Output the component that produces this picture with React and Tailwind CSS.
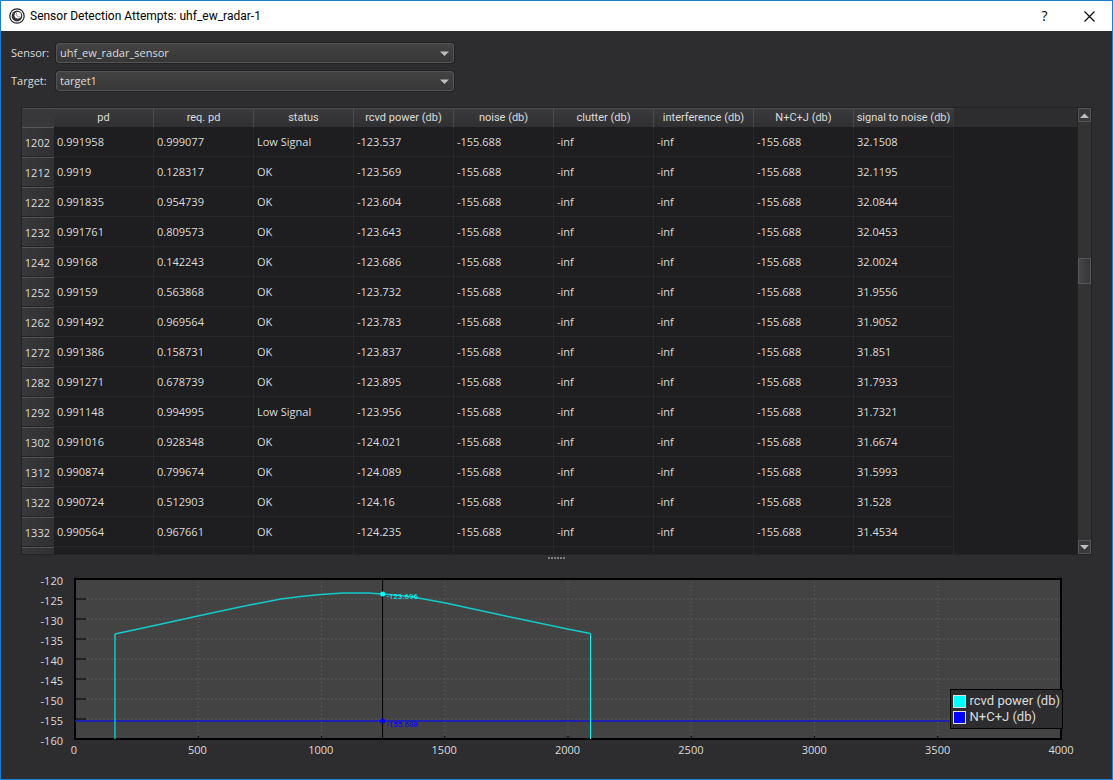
const COLUMNS = [
  "pd", "req. pd", "status", "rcvd power (db)", "noise (db)",
  "clutter (db)", "interference (db)", "N+C+J (db)", "signal to noise (db)",
];

const ROWS = [
  ["1202", "0.991958", "0.999077", "Low Signal", "-123.537", "32.1508"],
  ["1212", "0.9919", "0.128317", "OK", "-123.569", "32.1195"],
  ["1222", "0.991835", "0.954739", "OK", "-123.604", "32.0844"],
  ["1232", "0.991761", "0.809573", "OK", "-123.643", "32.0453"],
  ["1242", "0.99168", "0.142243", "OK", "-123.686", "32.0024"],
  ["1252", "0.99159", "0.563868", "OK", "-123.732", "31.9556"],
  ["1262", "0.991492", "0.969564", "OK", "-123.783", "31.9052"],
  ["1272", "0.991386", "0.158731", "OK", "-123.837", "31.851"],
  ["1282", "0.991271", "0.678739", "OK", "-123.895", "31.7933"],
  ["1292", "0.991148", "0.994995", "Low Signal", "-123.956", "31.7321"],
  ["1302", "0.991016", "0.928348", "OK", "-124.021", "31.6674"],
  ["1312", "0.990874", "0.799674", "OK", "-124.089", "31.5993"],
  ["1322", "0.990724", "0.512903", "OK", "-124.16", "31.528"],
  ["1332", "0.990564", "0.967661", "OK", "-124.235", "31.4534"],
  ["", "", "", "", "", ""],
];

function cellsOf([, pd, req, status, power, snr]) {
  const filled = pd !== "";
  const noise = filled ? "-155.688" : "";
  const inf = filled ? "-inf" : "";
  return [pd, req, status, power, noise, inf, inf, noise, snr];
}

const Y_TICKS = [-120, -125, -130, -135, -140, -145, -150, -155, -160];
const X_TICKS = [0, 500, 1000, 1500, 2000, 2500, 3000, 3500, 4000];

function TitleBar() {
  return (
    <header className="flex h-[30px] shrink-0 items-center bg-white pl-2 text-black">
      <svg className="size-4" viewBox="0 0 16 16" aria-hidden="true">
        <circle cx="8" cy="8" r="7.2" fill="#fff" stroke="#222" strokeWidth="1.2" />
        <circle cx="8" cy="8" r="5.4" fill="#333" />
        <circle cx="8.8" cy="7.2" r="3.3" fill="#fff" />
        <path d="M7.6 4.9A2.9 2.9 0 0 0 11.2 8.8" fill="none" stroke="#888" strokeWidth="0.9" />
      </svg>
      <h1 className="ml-[5px] font-['Roboto',sans-serif] text-xs">Sensor Detection Attempts: uhf_ew_radar-1</h1>
      <div className="ml-auto flex h-full">
        <button type="button" aria-label="Help" className="w-[45px] text-sm">?</button>
        <button type="button" aria-label="Close" className="flex w-[45px] items-center justify-center">
          <svg className="size-[11px]" viewBox="0 0 11 11" aria-hidden="true">
            <path d="M0.5 0.5L10.5 10.5M10.5 0.5L0.5 10.5" stroke="#000" strokeWidth="1.1" />
          </svg>
        </button>
      </div>
    </header>
  );
}

function Field({ id, label, value }) {
  return (
    <div className="flex items-center">
      <label htmlFor={id} className="w-[45px]">{label}</label>
      <div className="relative flex w-full max-w-[398px] items-center">
        <select
          id={id}
          className="h-5 w-full appearance-none rounded-[3px] border border-[#555557] bg-linear-to-b from-[#434344] to-[#373738] pr-6 pl-[3px] leading-4 shadow-[0_0_0_1px_#222223]"
        >
          <option>{value}</option>
        </select>
        <svg className="pointer-events-none absolute right-[5px] h-[5px] w-[9px]" viewBox="0 0 9 5" aria-hidden="true">
          <path d="M0 0.5H9L4.5 5Z" fill="#bebebe" />
        </svg>
      </div>
    </div>
  );
}

function ScrollButton({ label, path }) {
  return (
    <button
      type="button"
      aria-label={label}
      className="flex h-[14px] shrink-0 items-center justify-center border border-[#555557] bg-[#39393a]"
    >
      <svg className="h-[5px] w-[9px]" viewBox="0 0 9 5" aria-hidden="true">
        <path d={path} fill="#bebebe" />
      </svg>
    </button>
  );
}

function AttemptsTable() {
  return (
    <section className="mx-5 flex min-h-0 flex-1 border border-[#222223] bg-[#1e1e20]">
      <div className="min-w-0 flex-1 overflow-hidden bg-linear-to-b from-[#2d2d2f] from-[19px] to-[#1e1e20] to-[19px]">
        <table className="w-[932px] table-fixed border-separate border-spacing-0">
          <colgroup>
            <col className="w-8" />
            {COLUMNS.map((name) => <col key={name} className="w-[100px]" />)}
          </colgroup>
          <thead>
            <tr className="h-[19px]">
              <td className="border-t border-[#4c4c4e] bg-[#38383a] p-0" />
              {COLUMNS.map((name) => (
                <th
                  key={name}
                  scope="col"
                  className="border-t border-r border-[#4c4c4e] bg-linear-to-b from-[#3b3b3d] to-[#303032] p-0 text-center font-['Roboto',sans-serif] leading-4 font-normal whitespace-nowrap last:border-r-[#38383a]"
                >
                  {name}
                </th>
              ))}
            </tr>
          </thead>
          <tbody>
            {ROWS.map((row) => (
              <tr key={row[0]} className="h-[30px]">
                <th
                  scope="row"
                  className="border-t border-b border-t-[#555557] border-b-[#222223] bg-linear-to-r from-[#38383a] to-[#303032] p-0 pt-0.5 pr-1 text-right leading-4 font-normal"
                >
                  {row[0]}
                </th>
                {cellsOf(row).map((cell, i) => (
                  <td key={COLUMNS[i]} className="border-r border-b border-[#272729] p-0 pl-[3px] leading-4">
                    {cell}
                  </td>
                ))}
              </tr>
            ))}
          </tbody>
        </table>
      </div>
      <div className="flex w-[14px] flex-col border-l border-[#222223] bg-[#333334]">
        <ScrollButton label="Scroll up" path="M0 5H9L4.5 0.5Z" />
        <div className="grow-[136] basis-0" />
        <div className="h-[26px] border border-[#555557] bg-linear-to-r from-[#464648] to-[#373738]" />
        <div className="grow-[257] basis-0" />
        <ScrollButton label="Scroll down" path="M0 0H9L4.5 4.5Z" />
      </div>
    </section>
  );
}

function Plot() {
  return (
    <svg className="block h-full w-full overflow-visible" role="img" aria-label="rcvd power and N+C+J against time">
      <rect width="100%" height="160" fill="#434344" />
      {Y_TICKS.slice(1, -1).map((tick, i) => (
        <g key={tick}>
          <line x1="0" x2="100%" y1={20 * i + 20} y2={20 * i + 20} stroke="#4e4e50" strokeWidth="2" strokeDasharray="2 2" />
          <line x1="0" x2="11" y1={20 * i + 20} y2={20 * i + 20} stroke="#222223" strokeWidth="2" />
        </g>
      ))}
      {X_TICKS.slice(1, -1).map((tick) => (
        <g key={tick}>
          <line x1={`${tick / 40}%`} x2={`${tick / 40}%`} y1="3" y2="160" stroke="#626264" strokeWidth="1" strokeDasharray="1 3" />
          <line x1={`${tick / 40}%`} x2={`${tick / 40}%`} y1="157" y2="160" stroke="#000" />
        </g>
      ))}
      <rect width="100%" height="160" fill="none" stroke="#000" strokeWidth="2" />
      <line x1="31.2%" x2="31.2%" y1="0" y2="160" stroke="#000" />
      <line x1="0" x2="100%" y1="142" y2="142" stroke="#2020b0" strokeWidth="2" />
      <svg width="100%" height="160" viewBox="0 0 987 160" preserveAspectRatio="none">
        <path
          d="M40 55L82 46L123 37L165 28L206 20L226 17.5L246 15.5L268 14H293L308 15L325 16.5L341 18.5L371 24L431 37L493 50L516 54.6"
          fill="none" stroke="#12cbcb" strokeWidth="1.5" vectorEffect="non-scaling-stroke"
        />
        <path d="M40 55V160M516 54.6V160" stroke="#0ff" vectorEffect="non-scaling-stroke" />
      </svg>
      <circle cx="31.2%" cy="15" r="2.5" fill="#0ff" />
      <circle cx="31.2%" cy="142" r="2.5" fill="#00f" />
      <g className="font-['Roboto',sans-serif]" fontSize="8">
        <text x="31.2%" y="20" dx="4" fill="#0ff">-123.696</text>
        <text x="31.2%" y="148" dx="4" fill="#00f">-155.688</text>
      </g>
    </svg>
  );
}

function Legend() {
  return (
    <ul className="absolute right-[-2px] bottom-[10px] border border-black bg-[#2d2d2f] px-0.5 py-[3px] font-['Roboto',sans-serif] text-[13px] leading-4">
      <li className="flex items-center gap-1 whitespace-nowrap">
        <span className="size-[13px] border border-[#e0e0e0] bg-[#00ffff]" />
        rcvd power (db)
      </li>
      <li className="flex items-center gap-1 whitespace-nowrap">
        <span className="size-[13px] border border-[#e0e0e0] bg-[#0000ff]" />
        N+C+J (db)
      </li>
    </ul>
  );
}

function Chart() {
  return (
    <section className="mt-[19px] mr-[51px] mb-5 grid shrink-0 grid-cols-[74px_1fr] grid-rows-[160px_20px]">
      <div className="-mb-0.5 flex flex-col justify-between pt-0.5 pr-3">
        {Y_TICKS.map((tick) => (
          <span key={tick} className="flex h-0 items-center justify-end">{tick}</span>
        ))}
      </div>
      <div className="relative">
        <Plot />
        <Legend />
      </div>
      <div className="col-start-2 -ml-px flex items-center justify-between pt-0.5">
        {X_TICKS.map((tick) => (
          <span key={tick} className="flex w-0 justify-center">{tick}</span>
        ))}
      </div>
    </section>
  );
}

export default function App() {
  return (
    <div className="flex h-screen flex-col border border-[#1a7fd4] bg-[#2d2d2f] font-['Open_Sans',sans-serif] text-[11px] leading-4 text-[#dcdcdc]">
      <TitleBar />
      <form className="flex shrink-0 flex-col gap-2 pt-3 pb-4 pl-2.5">
        <Field id="sensor" label="Sensor:" value="uhf_ew_radar_sensor" />
        <Field id="target" label="Target:" value="target1" />
      </form>
      <AttemptsTable />
      <div className="flex h-[5px] shrink-0 items-center justify-center gap-px">
        {[0, 1, 2, 3, 4, 5].map((dot) => <span key={dot} className="size-0.5 bg-[#7c7c7e]" />)}
      </div>
      <Chart />
    </div>
  );
}
